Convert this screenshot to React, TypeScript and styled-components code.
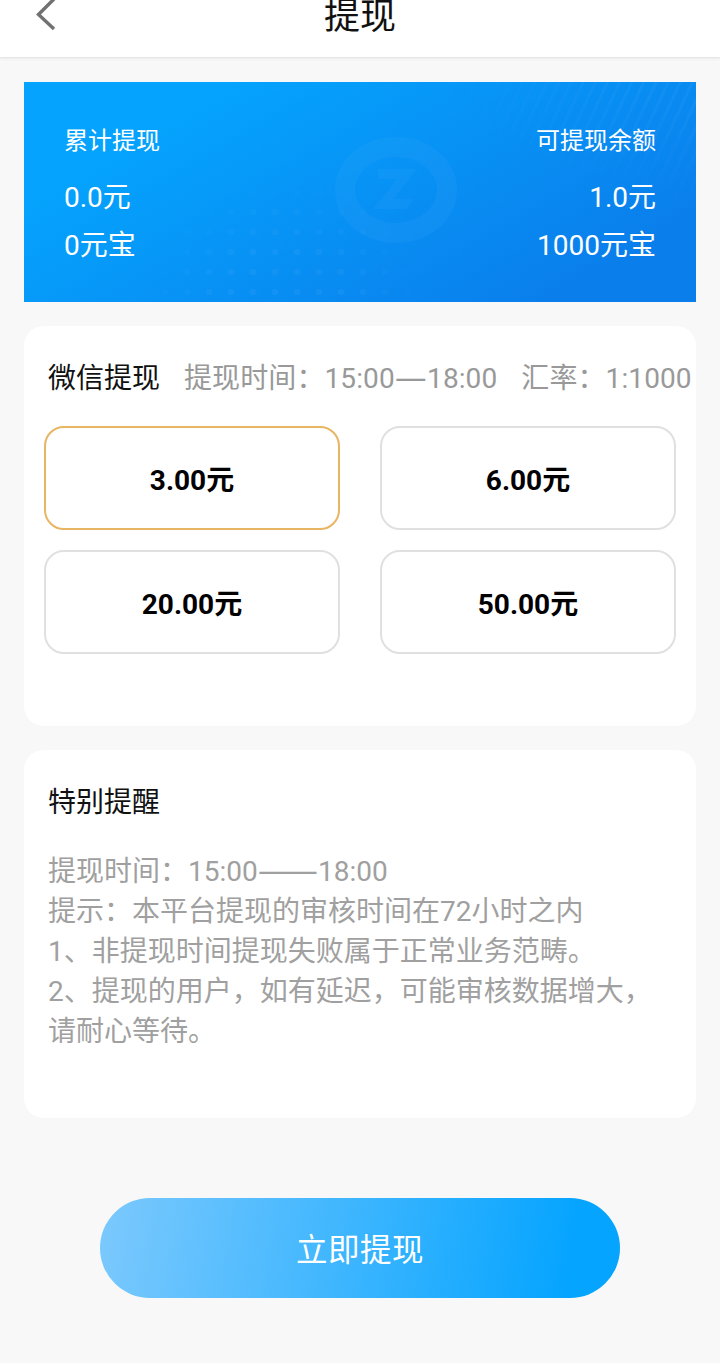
import styled, { createGlobalStyle } from 'styled-components';

const GlobalStyle = createGlobalStyle`
  html, body {
    margin: 0;
    padding: 0;
    background: #f8f8f8;
  }
  * {
    box-sizing: border-box;
  }
`;

const Page = styled.div`
  width: 720px;
  height: 1363px;
  overflow: hidden;
  background: #f8f8f8;
  font-family: "Roboto", "Noto Sans CJK SC", sans-serif;
`;

const Header = styled.header`
  height: 58px;
  background: #fff;
  border-bottom: 1px solid #e6e6e6;
  box-shadow: 0 1px 3px rgba(0, 0, 0, 0.06);
  display: flex;
  justify-content: center;
  position: relative;
`;

const BackIcon = styled.svg`
  position: absolute;
  left: 34px;
  top: 0;
`;

const Title = styled.h1`
  margin: 0;
  font-size: 36px;
  font-weight: 400;
  line-height: 35px;
  color: #111;
`;

const Content = styled.main`
  padding: 24px 24px 0;
  display: flex;
  flex-direction: column;
`;

const Banner = styled.section`
  height: 220px;
  padding: 43px 40px 0;
  display: flex;
  justify-content: space-between;
  position: relative;
  overflow: hidden;
  color: #fff;
  background: linear-gradient(150deg, #05a3fd 20%, #0a7fec 85%);

  &::before {
    content: '';
    position: absolute;
    top: 0;
    right: 0;
    width: 260px;
    height: 130px;
    background: repeating-linear-gradient(115deg, rgba(255, 255, 255, 0.04) 0 3px, transparent 3px 11px);
    mask-image: radial-gradient(ellipse at top right, #000 10%, transparent 72%);
  }

  &::after {
    content: '';
    position: absolute;
    left: 130px;
    bottom: 0;
    width: 260px;
    height: 120px;
    background: radial-gradient(rgba(255, 255, 255, 0.045) 3px, transparent 4px) 0 0 / 22px 20px;
    mask-image: radial-gradient(ellipse at 50% 100%, #000 35%, transparent 80%);
  }
`;

const Watermark = styled.svg`
  position: absolute;
  left: 311px;
  top: 55px;
`;

const BannerColumn = styled.div<{ $right?: boolean }>`
  display: flex;
  flex-direction: column;
  align-items: ${(p) => (p.$right ? 'flex-end' : 'flex-start')};
  position: relative;
  z-index: 1;
`;

const BannerLabel = styled.div`
  font-size: 24px;
  line-height: 32px;
  margin-bottom: 17px;
`;

const BannerValue = styled.div`
  font-size: 28px;
  line-height: 48px;
  height: 48px;
`;

const Card = styled.section<{ $height: number }>`
  height: ${(p) => p.$height}px;
  margin-top: 24px;
  background: #fff;
  border-radius: 20px;
  padding: 33px 0 0 24px;
`;

const CardHead = styled.div`
  display: flex;
  align-items: baseline;
  height: 40px;
  white-space: nowrap;
`;

const CardTitle = styled.div`
  font-size: 28px;
  line-height: 40px;
  color: #111;
`;

const Meta = styled.span`
  font-size: 28px;
  line-height: 40px;
  color: #999;
  margin-left: 24px;
  letter-spacing: 0.1px;
`;

const Dash = styled.span`
  font-family: "Noto Sans CJK SC", sans-serif;
  font-size: 36px;
  line-height: 0;
  vertical-align: -2px;
`;

const AmountGrid = styled.div`
  display: grid;
  grid-template-columns: 296px 296px;
  column-gap: 40px;
  row-gap: 20px;
  margin: 27px 0 0 -4px;
`;

const Amount = styled.div<{ $active?: boolean }>`
  height: 104px;
  border: 2px solid ${(p) => (p.$active ? '#e8b562' : '#e0e0e0')};
  border-radius: 20px;
  display: flex;
  align-items: center;
  justify-content: center;
  font-size: 28px;
  font-weight: 700;
  color: #000;
`;

const NoticeBody = styled.div`
  margin-top: 29px;
  width: 620px;
  font-size: 28px;
  line-height: 40px;
  color: #a0a0a0;
`;

const SubmitButton = styled.button`
  align-self: center;
  width: 520px;
  height: 100px;
  margin-top: 80px;
  padding: 0 0 3px;
  border: 0;
  border-radius: 50px;
  background: linear-gradient(100deg, #7cc9fd 0%, #05a4ff 90%);
  color: #fff;
  font-family: inherit;
  font-size: 31.5px;
  letter-spacing: 0.5px;
`;

const amounts = ['3.00元', '6.00元', '20.00元', '50.00元'];

const App = () => {
  return (
    <Page>
      <GlobalStyle />
      <Header>
        <BackIcon width="24" height="32" viewBox="0 0 24 32">
          <path d="M20 -1 L4.5 14.5 L20 29" fill="none" stroke="#717171" strokeWidth="3.4" />
        </BackIcon>
        <Title>提现</Title>
      </Header>
      <Content>
        <Banner>
          <Watermark width="122" height="106" viewBox="0 0 122 106">
            <ellipse cx="61" cy="53" rx="51" ry="43" fill="none" stroke="rgba(255,255,255,0.035)" strokeWidth="20" />
            <path d="M42 32 H82 L58 62 H78 L72 72 H38 L62 42 H44 Z" fill="rgba(255,255,255,0.03)" />
          </Watermark>
          <BannerColumn>
            <BannerLabel>累计提现</BannerLabel>
            <BannerValue>0.0元</BannerValue>
            <BannerValue>0元宝</BannerValue>
          </BannerColumn>
          <BannerColumn $right>
            <BannerLabel>可提现余额</BannerLabel>
            <BannerValue>1.0元</BannerValue>
            <BannerValue>1000元宝</BannerValue>
          </BannerColumn>
        </Banner>
        <Card $height={400}>
          <CardHead>
            <CardTitle>微信提现</CardTitle>
            <Meta>提现时间：15:00<Dash>—</Dash>18:00</Meta>
            <Meta>汇率：1:1000</Meta>
          </CardHead>
          <AmountGrid>
            {amounts.map((amount, i) => (
              <Amount key={amount} $active={i === 0}>
                {amount}
              </Amount>
            ))}
          </AmountGrid>
        </Card>
        <Card $height={368}>
          <CardHead>
            <CardTitle>特别提醒</CardTitle>
          </CardHead>
          <NoticeBody>
            <div>提现时间：15:00<Dash>——</Dash>18:00</div>
            <div>提示：本平台提现的审核时间在72小时之内</div>
            <div>1、非提现时间提现失败属于正常业务范畴。</div>
            <div>2、提现的用户，如有延迟，可能审核数据增大，</div>
            <div>请耐心等待。</div>
          </NoticeBody>
        </Card>
        <SubmitButton>立即提现</SubmitButton>
      </Content>
    </Page>
  );
};

export default App;
